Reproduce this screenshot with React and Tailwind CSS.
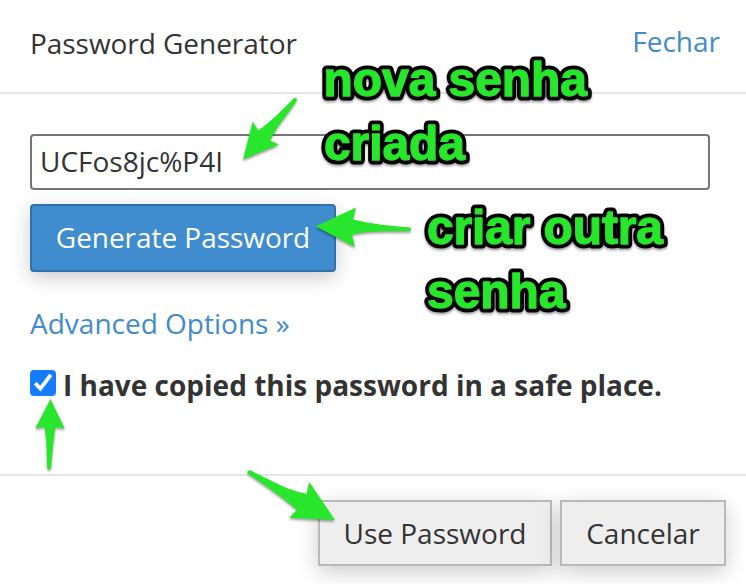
function Arrow({ d }) {
  return <path d={d} fill="#27e62b" />;
}

function NoteLine({ x, y, width, children }) {
  const place = { x, y, textLength: width };
  return (
    <g>
      <text {...place} fill="#000" stroke="#000" strokeWidth="9" strokeLinejoin="round">
        {children}
      </text>
      <text {...place} fill="#27e62b" stroke="#27e62b" strokeWidth="1.3" strokeLinejoin="round" aria-hidden="true">
        {children}
      </text>
    </g>
  );
}

export default function App() {
  return (
    <div className="relative flex h-[584px] w-[746px] flex-col overflow-hidden bg-white font-['Open_Sans','Noto_Sans',sans-serif] text-[28px] leading-[40px] text-[#333]">
      <header className="flex h-[94px] shrink-0 items-start justify-between border-b-2 border-[#e5e5e5] pt-[21px] pr-[26px] pl-[30px]">
        <h1 className="pt-[2px] tracking-[-0.05px] whitespace-nowrap">Password Generator</h1>
        <a className="whitespace-nowrap text-[#428bca]">Fechar</a>
      </header>

      <main className="flex h-[382px] shrink-0 flex-col items-start border-b-2 border-[#e5e5e5] px-[30px] pt-10">
        <div className="flex h-14 w-[680px] shrink-0 items-center rounded-[4px] border-2 border-[#767676] pb-[2px] pl-2">
          UCFos8jc%P4I
        </div>
        <button className="mt-[14px] flex h-[68px] w-[306px] shrink-0 items-center justify-center rounded-[4px] border-2 border-[#3071a9] bg-[#3f8ccf] pb-[2px] tracking-[-0.05px] whitespace-nowrap text-white shadow-[0_6px_20px_rgba(0,0,0,0.2)]">
          Generate Password
        </button>
        <a className="mt-[31px] whitespace-nowrap text-[#428bca]">Advanced Options »</a>
        <label className="mt-[22px] flex items-start font-bold whitespace-nowrap">
          <span className="mt-[5px] mr-[7px] flex size-[26px] items-center justify-center rounded-[4px] bg-[#167cff]">
            <svg viewBox="0 0 26 26" className="size-[26px]">
              <path d="M5.2 13.2 L10.4 18.6 L20.8 4.8" fill="none" stroke="#fff" strokeWidth="3.8" />
            </svg>
          </span>
          I have copied this password in a safe place.
        </label>
      </main>

      <footer className="flex justify-end gap-2 pt-6 pr-5">
        <button className="flex h-[66px] w-[234px] items-center justify-center border-2 border-[#b9b9b9] bg-[#eee] whitespace-nowrap shadow-[0_6px_20px_rgba(0,0,0,0.2)]">
          Use Password
        </button>
        <button className="flex h-[66px] w-[166px] items-center justify-center border-2 border-[#b9b9b9] bg-[#eee] whitespace-nowrap shadow-[0_6px_20px_rgba(0,0,0,0.2)]">
          Cancelar
        </button>
      </footer>

      <svg
        viewBox="0 0 746 584"
        className="pointer-events-none absolute inset-0 h-[584px] w-[746px] font-['Liberation_Sans',Arial,sans-serif] text-[48px] font-bold drop-shadow-[0_2px_1px_rgba(0,0,0,0.35)]"
      >
        <Arrow d="M243 159.5 L252.7 121.5 L258.2 130.3 C271 122 283 109 294 98 Q297 97 297 100 C289 113 278 124 270 140.5 L279 144.5 Z" />
        <Arrow d="M315.5 226.3 L356 207.5 L353 219.5 C372 224 391 226 410.5 227.5 Q411.5 229.5 410.5 231 C391 231.5 368 230.5 352 234.5 L355 247 Z" />
        <Arrow d="M50.5 399 L64.8 428.5 L55.5 427.3 C53 441 52.5 454 51 468 Q49 471 47.2 468 C46.8 454 47 441 44.5 427 L35.3 428.3 Z" />
        <Arrow d="M335 520 L289 517.7 L297 510 C283 497 264 485 247.3 473 Q247 470 250 470.3 C269 479 288 491 306.5 493.8 L309.3 482 Z" />

        <NoteLine x={323.5} y={95.5} width={263.5}>nova senha</NoteLine>
        <NoteLine x={324} y={159.5} width={141}>criada</NoteLine>
        <NoteLine x={427} y={243.5} width={236}>criar outra</NoteLine>
        <NoteLine x={427} y={307.5} width={138.5}>senha</NoteLine>
      </svg>
    </div>
  );
}
